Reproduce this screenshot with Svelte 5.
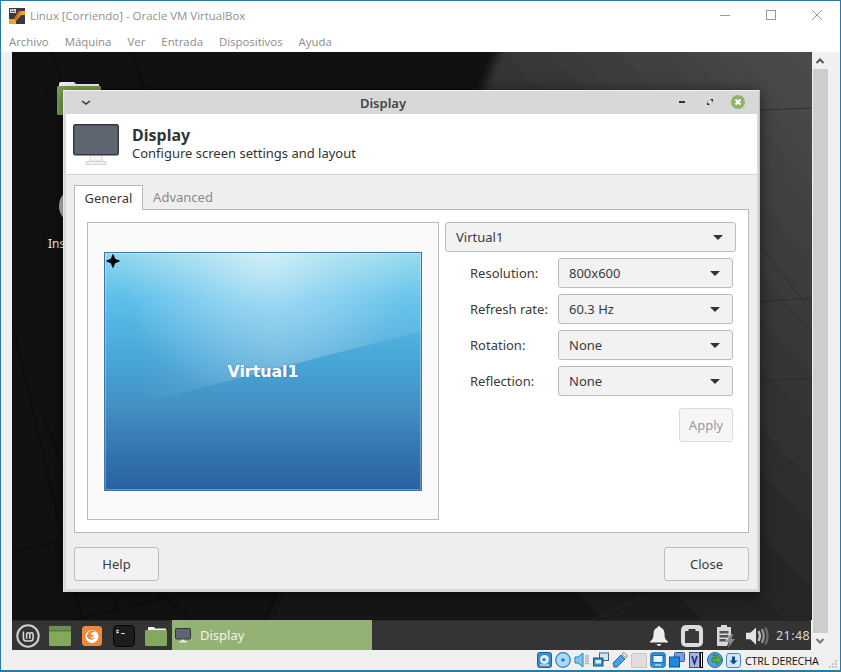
<script>
  const menus = ['Archivo', 'Máquina', 'Ver', 'Entrada', 'Dispositivos', 'Ayuda'];
  const rows = [
    { label: 'Resolution:', value: '800x600' },
    { label: 'Refresh rate:', value: '60.3 Hz' },
    { label: 'Rotation:', value: 'None' },
    { label: 'Reflection:', value: 'None' }
  ];
</script>

<div class="vbox">
  <header class="titlebar">
    <svg class="vbox-logo" viewBox="0 0 16 16" width="16" height="16">
      <rect width="16" height="16" fill="#3a3a40" />
      <path d="M0 16V11H5L10 3H16V7H12L7 13V16Z" fill="#f0a030" />
      <path d="M5 11 10 3H12L7 13Z" fill="#d9661c" />
      <rect x="1" y="1" width="6" height="4" fill="#ddd" />
      <path d="M2 2h1M4 2h1M2 3.5h4" stroke="#444" stroke-width=".8" />
    </svg>
    <span class="title">Linux [Corriendo] - Oracle VM VirtualBox</span>
    <div class="win-controls">
      <svg viewBox="0 0 10 10" width="10" height="10"><path d="M0 5.5H10" stroke="#999" /></svg>
      <svg viewBox="0 0 10 10" width="10" height="10"><rect x=".5" y=".5" width="9" height="9" fill="none" stroke="#999" /></svg>
      <svg viewBox="0 0 10 10" width="10" height="10"><path d="M0 0 10 10M10 0 0 10" stroke="#999" /></svg>
    </div>
  </header>

  <nav class="menubar">
    {#each menus as m}
      <span>{m}</span>
    {/each}
  </nav>

  <div class="middle">
    <main class="desktop">
      <svg class="wallpaper" viewBox="0 0 800 568" preserveAspectRatio="none">
        <defs>
          <linearGradient id="wallGrad" x1="1" y1="0" x2="0.25" y2="0.75">
            <stop offset="0" stop-color="#505050" />
            <stop offset="0.35" stop-color="#3a3a3a" />
            <stop offset="0.7" stop-color="#252525" />
            <stop offset="1" stop-color="#151515" />
          </linearGradient>
          <filter id="soft" x="-5%" y="-5%" width="110%" height="110%">
            <feGaussianBlur stdDeviation="5" />
          </filter>
        </defs>
        <rect width="800" height="568" fill="#111" />
        <polygon points="494,-20 830,-20 830,590 250,590" fill="url(#wallGrad)" filter="url(#soft)" />
        <g stroke="#0a0a0a" stroke-width="2" fill="none" opacity=".55">
          <path d="M40 0 120 240M120 0 190 200M0 270 70 568M30 360 110 568M180 568 60 470" />
          <path d="M0 500 130 470M60 568 220 530" />
        </g>
        <g stroke="#2a2a2a" fill="none" opacity=".8">
          <path d="M700 60 800 56M745 250 800 246M745 330 800 326M640 480 800 400M580 568 800 470M745 190 800 260" />
        </g>
      </svg>

      <div class="desk-icon folder-icon">
        <svg viewBox="0 0 46 36" width="46" height="36">
          <path d="M3 8V5Q3 3 5 3H18L20 5H43V10H3Z" fill="#f4f4f4" />
          <path d="M1 8Q1 7 3 7H44Q45 7 45 9V36H2Q1 36 1 34Z" fill="#7ea356" />
        </svg>
      </div>
      <div class="desk-icon disc-icon"></div>
      <span class="desk-icon desk-label">Ins</span>

      <section class="dialog">
        <div class="dlg-titlebar">
          <svg class="dlg-menu" viewBox="0 0 10 6" width="10" height="6"><path d="M1 1 5 4 9 1" fill="none" stroke="#333" stroke-width="1.5" /></svg>
          <span class="dlg-title">Display</span>
          <div class="dlg-controls">
            <svg viewBox="0 0 8 8" width="8" height="8"><rect x="1" y="3" width="6" height="2" fill="#333" /></svg>
            <svg viewBox="0 0 8 8" width="8" height="8"><path d="M4 1H7V4ZM1 4V7H4Z" fill="#333" /><path d="M3 2 1 3V4L4 1ZM5 6 7 5V4L4 7Z" fill="#aaa" /></svg>
            <svg class="dlg-close" viewBox="0 0 14 14" width="14" height="14">
              <circle cx="7" cy="7" r="7" fill="#8fb46a" />
              <path d="M4.500 4.500 9.500 9.500M9.500 4.500 4.500 9.500" stroke="#fff" stroke-width="2" />
            </svg>
          </div>
        </div>

        <div class="dlg-header">
          <svg class="dlg-monitor" viewBox="0 0 46 42" width="46" height="42">
            <path d="M17 31V37H29V31" fill="#f6f6f8" stroke="#d8dae0" />
            <rect x="13" y="37.5" width="20" height="3" fill="#eef0f2" stroke="#d4d6dc" />
            <rect x=".7" y=".7" width="44.600" height="30" rx="1.500" fill="#5f6672" stroke="#31363f" stroke-width="1.400" />
          </svg>
          <div class="dlg-heading">
            <h1>Display</h1>
            <p>Configure screen settings and layout</p>
          </div>
        </div>

        <div class="dlg-body">
          <div class="tabs">
            <span class="tab active">General</span>
            <span class="tab">Advanced</span>
          </div>
          <div class="page">
            <div class="preview">
              <div class="monitor">
                <svg class="monitor-bg" viewBox="0 0 318 239" preserveAspectRatio="none">
                  <defs>
                    <linearGradient id="skyGrad" x1="0" y1="0" x2="0" y2="1">
                      <stop offset="0" stop-color="#8fd8ec" />
                      <stop offset="0.19" stop-color="#5cbfea" />
                      <stop offset="0.45" stop-color="#48a6d8" />
                      <stop offset="0.65" stop-color="#428fc4" />
                      <stop offset="0.88" stop-color="#3070ac" />
                      <stop offset="1" stop-color="#2b60a2" />
                    </linearGradient>
                    <radialGradient id="glow" gradientUnits="userSpaceOnUse" cx="159" cy="0" r="150">
                      <stop offset="0" stop-color="#fff" stop-opacity=".5" />
                      <stop offset="0.45" stop-color="#fff" stop-opacity=".22" />
                      <stop offset="1" stop-color="#fff" stop-opacity="0" />
                    </radialGradient>
                    <linearGradient id="gloss" gradientUnits="userSpaceOnUse" x1="30" y1="0" x2="318" y2="0">
                      <stop offset="0" stop-color="#fff" stop-opacity="0" />
                      <stop offset="0.5" stop-color="#fff" stop-opacity=".17" />
                      <stop offset="1" stop-color="#fff" stop-opacity=".08" />
                    </linearGradient>
                  </defs>
                  <rect width="318" height="239" fill="url(#skyGrad)" />
                  <polygon points="0,0 318,0 318,79 50,148 0,148" fill="url(#gloss)" />
                  <polygon points="0,0 318,0 318,79 50,148 0,148" fill="url(#glow)" />
                </svg>
                <span class="monitor-name">Virtual1</span>
                <svg class="primary-star" viewBox="0 0 16 16" width="16" height="16">
                  <path d="M8 .5 10.200 5.800 15.500 8 10.200 10.200 8 15.500 5.800 10.200 .5 8 5.800 5.800Z" fill="#050505" />
                </svg>
              </div>
            </div>

            <div class="settings">
              <div class="combo">
                <span>Virtual1</span>
                <i class="caret"></i>
              </div>
              <div class="rows">
                {#each rows as row}
                  <div class="row">
                    <span class="row-label">{row.label}</span>
                    <div class="combo">
                      <span>{row.value}</span>
                      <i class="caret"></i>
                    </div>
                  </div>
                {/each}
              </div>
              <div class="apply-wrap">
                <button class="btn apply" disabled>Apply</button>
              </div>
            </div>
          </div>

          <div class="dlg-actions">
            <button class="btn">Help</button>
            <button class="btn">Close</button>
          </div>
        </div>
      </section>

      <div class="spacer"></div>

      <footer class="panel">
        <svg class="mint" viewBox="0 0 26 26" width="24" height="24">
          <circle cx="13" cy="13" r="11.600" fill="none" stroke="#cfcfcf" stroke-width="2.200" />
          <path d="M8 8V15Q8 18.500 11 18.500H15.500Q18.500 18.500 18.500 15.500V11.500Q18.500 9.500 16.800 9.500 15 9.500 15 11.500V16M15 11.500Q15 9.500 13.200 9.500 11.500 9.500 11.500 11.500V16" fill="none" stroke="#d8d8d8" stroke-width="1.700" />
        </svg>
        <svg class="launcher" viewBox="0 0 22 20" width="22" height="20">
          <rect width="22" height="20" rx="1" fill="#84a95c" />
          <rect width="22" height="4.500" fill="#6f8f4c" />
          <rect y="4.500" width="22" height=".8" fill="#3f5a2a" />
        </svg>
        <svg class="launcher" viewBox="0 0 20 20" width="20" height="20">
          <rect width="20" height="20" rx="3.500" fill="#f08a3a" />
          <circle cx="10" cy="10.500" r="6.500" fill="#fff" />
          <path d="M5 11C6 14 11 15 13 12 11 13 8.500 12.500 8.500 10.500 10 11.500 12 10.500 12 9 10.500 9.500 9 9 8.500 8 9.500 6.500 11 6 13 6 14.500 7.500 15 9 15 10 15 7 13 4.500 10 4.500 7 4.500 5 7 5 11Z" fill="#f08a3a" />
        </svg>
        <svg class="launcher term" viewBox="0 0 22 22" width="22" height="22">
          <rect x=".5" y=".5" width="21" height="21" rx="3.500" fill="#1d1d1d" stroke="#050505" />
          <path d="M4 5.500H6M3.500 7.500H6M4 4.500V8.500M8 8.500H12" stroke="#e8e8e8" stroke-width=".9" fill="none" />
        </svg>
        <svg class="launcher last" viewBox="0 0 22 20" width="22" height="20">
          <path d="M3 4V1.500Q3 1 4 1H9L10 2.500H21V6H3Z" fill="#f4f4f4" />
          <path d="M0 5Q0 4 1 4H21Q22 4 22 5V19Q22 20 21 20H1Q0 20 0 19Z" fill="#84a95c" />
        </svg>
        <div class="task">
          <svg viewBox="0 0 16 15" width="16" height="15">
            <path d="M6.500 11V13H9.500V11" fill="#eee" />
            <rect x="4.500" y="13" width="7" height="1.500" fill="#eee" />
            <rect x=".5" y=".5" width="15" height="10.500" rx="1" fill="#5f6672" stroke="#2f343c" />
          </svg>
          <span>Display</span>
        </div>
        <div class="tray">
          <svg viewBox="0 0 18 20" width="18" height="20">
            <path d="M9 0Q10.500 0 10.500 1.500C13.500 2.500 14.500 5 14.500 8 14.500 12 15.500 14 18 15.500V16.500H0V15.500C2.500 14 3.500 12 3.500 8 3.500 5 4.500 2.500 7.500 1.500 7.500 0 9 0 9 0ZM6.500 18H11.500Q10.500 20 9 20 7.500 20 6.500 18Z" fill="#eee" />
          </svg>
          <svg viewBox="0 0 22 22" width="22" height="22">
            <rect width="22" height="22" rx="5" fill="#dcdcdc" />
            <path d="M4 18V7Q4 6 5 6H7.500V4H14.500V6H17Q18 6 18 7V18Z" fill="#383838" />
          </svg>
          <svg viewBox="0 0 20 24" width="20" height="24">
            <path d="M5 3V1H11V3H15V13L11 22H1V3Z" fill="#d9d9d9" />
            <path d="M3.500 7H12.500V9.500H3.500ZM3.500 11H12.500V13.500H3.500ZM3.500 15H10V17.500H3.500Z" fill="#555" />
            <path d="M15 10 10 18H13.500L12 24 19 15H15.500L17 10Z" fill="#8a8a8a" />
          </svg>
          <svg class="speaker" viewBox="0 0 24 20" width="23" height="20">
            <path d="M0 6.500H4.500L10.500 1V19L4.500 13.500H0Z" fill="#e2e2e2" />
            <path d="M13 5Q16 10 13 15" fill="none" stroke="#c8c8c8" stroke-width="2.400" />
            <path d="M16.500 3Q20.500 10 16.500 17" fill="none" stroke="#999" stroke-width="2.400" />
            <path d="M20 1Q25 10 20 19" fill="none" stroke="#6c6c6c" stroke-width="2.400" />
          </svg>
          <span class="clock">21:48</span>
        </div>
      </footer>
    </main>

    <aside class="vscroll">
      <svg viewBox="0 0 10 6" width="10" height="6"><path d="M1.500 5 5 1.500 8.500 5" fill="none" stroke="#555" stroke-width="2" /></svg>
      <div class="thumb"></div>
      <svg viewBox="0 0 10 6" width="10" height="6"><path d="M1.500 1 5 4.500 8.500 1" fill="none" stroke="#777" stroke-width="2" /></svg>
    </aside>
  </div>

  <footer class="statusbar">
    <svg viewBox="0 0 15 16" width="15" height="16"><rect x=".5" y=".5" width="14" height="15" rx="2" fill="#3b8ed0" stroke="#1d5fa0" /><circle cx="7.500" cy="7.500" r="4.500" fill="#dcecf8" /><circle cx="7" cy="7.500" r="1.500" fill="#3b6ea0" /><path d="M3 13H12" stroke="#fff" /></svg>
    <svg viewBox="0 0 16 16" width="16" height="16"><circle cx="8" cy="8" r="7.300" fill="#a8dcf6" stroke="#2a7fc4" stroke-width="1.200" /><circle cx="8" cy="8" r="1.800" fill="#2a7fc4" /></svg>
    <svg viewBox="0 0 16 16" width="16" height="16"><path d="M1 5H4L9 1V15L4 11H1Z" fill="#7cc4ec" stroke="#2a7fc4" /><path d="M11 4H15M11 6.500H15M11 9H15M11 11.500H15" stroke="#aaa" stroke-width="1.300" /></svg>
    <svg viewBox="0 0 16 16" width="16" height="16"><rect x="6.500" y="1" width="9" height="7.500" fill="#cfe8f8" stroke="#44648a" /><rect x=".5" y="6" width="9.500" height="8" fill="#3b8ed0" stroke="#1d4f88" /><rect x="2.500" y="8" width="5.500" height="3.500" fill="#dff" /></svg>
    <svg viewBox="0 0 16 16" width="16" height="16"><path d="M1 11 9 3 13 7 5 15H2Z" fill="#4aa4e4" stroke="#1d64ac" /><path d="M10 2 12 .5 15.500 4 14 6Z" fill="#eee" stroke="#888" /></svg>
    <svg viewBox="0 0 16 16" width="16" height="16"><path d="M.5 3Q.5 1.500 2 1.500H14Q15.500 1.500 15.500 3V15.500H.5Z" fill="#dedede" stroke="#c8c8c8" /></svg>
    <svg viewBox="0 0 16 16" width="16" height="16"><rect x=".8" y=".8" width="14.400" height="14.400" rx="2" fill="#2f96e4" stroke="#1d64ac" /><rect x="3" y="3.500" width="10" height="7" fill="#e8f6ff" stroke="#1d64ac" /><path d="M5 13H11" stroke="#fff" /></svg>
    <svg viewBox="0 0 16 16" width="16" height="16"><rect x="5.500" y=".5" width="10" height="9" rx="1" fill="#7a9ee0" stroke="#3a5a9a" /><rect x=".5" y="5" width="10" height="10" fill="#1e88dc" stroke="#14508c" /></svg>
    <svg viewBox="0 0 13 16" width="13" height="16"><rect x="1.500" y=".5" width="10" height="15" fill="#a8b4e4" stroke="#3c4a90" /><path d="M4 4 6.500 11.500 9 4" fill="none" stroke="#1e2c70" stroke-width="1.600" /></svg>
    <span class="kbd-bar"></span>
    <svg class="globe" viewBox="0 0 16 16" width="16" height="16"><circle cx="8" cy="8" r="7.500" fill="#4aa4e4" stroke="#2a6aac" /><path d="M6 3H10L15 8 10 13V10H5V6H10Z" fill="#5cae3c" stroke="#2d6a1c" stroke-width=".7" /></svg>
    <svg viewBox="0 0 15 15" width="15" height="15"><rect x=".5" y=".5" width="14" height="14" rx="2.500" fill="#d2e8fa" stroke="#4a88c4" /><path d="M6 3.500H9V7.500H11.500L7.500 11.500 3.500 7.500H6Z" fill="#124e94" /></svg>
    <span class="hostkey">CTRL DERECHA</span>
    <svg class="grip" viewBox="0 0 8 8" width="8" height="8"><path d="M6 0h2v2H6ZM3 3h2v2H3ZM6 3h2v2H6ZM0 6h2v2H0ZM3 6h2v2H3ZM6 6h2v2H6Z" fill="#c4c4c4" /></svg>
  </footer>
</div>

<style>
  :global(body) {
    background: #fff;
  }

  .vbox {
    width: 841px;
    height: 672px;
    box-sizing: border-box;
    border: 1px solid #2b79a8;
    border-bottom-width: 2px;
    display: flex;
    flex-direction: column;
    overflow: hidden;
    background: #f0f0f0;
    font-family: "Noto Sans", sans-serif;
  }

  .titlebar {
    height: 29px;
    flex: none;
    background: #fff;
    display: flex;
    align-items: center;
    padding-left: 8px;
  }
  .vbox-logo {
    margin-right: 5px;
    margin-top: 1px;
  }
  .title {
    font-family: "Open Sans", sans-serif;
    font-size: 11.45px;
    color: #8f8f8f;
  }
  .win-controls {
    margin-left: auto;
    margin-right: 18px;
    display: flex;
    gap: 36px;
    margin-top: -1px;
  }

  .menubar {
    height: 22px;
    flex: none;
    background: #fff;
    display: flex;
    align-items: center;
    padding-left: 8px;
    gap: 16px;
    font-family: "Open Sans", sans-serif;
    font-size: 11.4px;
    color: #8c8c8c;
  }

  .middle {
    flex: 1;
    display: flex;
    min-height: 0;
  }

  .desktop {
    position: relative;
    width: 800px;
    margin-left: 11px;
    display: flex;
    flex-direction: column;
    background: #111;
  }
  .wallpaper {
    position: absolute;
    left: 0;
    top: 0;
    width: 800px;
    height: 568px;
  }
  .spacer {
    flex: 1;
  }

  .desk-icon {
    position: absolute;
  }
  .folder-icon {
    left: 44px;
    top: 27px;
  }
  .disc-icon {
    left: 47px;
    top: 136px;
    width: 36px;
    height: 36px;
    border-radius: 50%;
    background: #bdbdbd;
  }
  .desk-label {
    left: 36px;
    top: 183px;
    color: #eee;
    font-size: 12px;
  }

  .dialog {
    position: absolute;
    left: 51px;
    top: 38px;
    width: 697px;
    height: 502px;
    box-sizing: border-box;
    background: #d8d8d8;
    border-top: 1px solid #f2f2f2;
    border-left: 1px solid #e6e6e6;
    border-right: 1px solid #bdbdbd;
    padding: 0 2px 3px 2px;
    display: flex;
    flex-direction: column;
    color: #3a3a3a;
    box-shadow: 0 2px 14px rgba(0, 0, 0, 0.55);
  }

  .dlg-titlebar {
    height: 23px;
    flex: none;
    display: flex;
    align-items: center;
    justify-content: center;
    padding-right: 57px;
    position: relative;
  }
  .dlg-title {
    font-size: 13px;
    font-weight: 600;
    color: #444;
  }
  .dlg-menu {
    position: absolute;
    left: 15px;
    top: 9px;
  }
  .dlg-controls {
    position: absolute;
    right: 12px;
    top: 4px;
    display: flex;
    align-items: center;
    gap: 20px;
  }
  .dlg-close {
    margin-left: -3px;
  }

  .dlg-header {
    height: 61px;
    flex: none;
    box-sizing: border-box;
    background: #fff;
    border-bottom: 1px solid #d2d2d2;
    display: flex;
    align-items: center;
    padding-left: 7px;
    gap: 13px;
  }
  .dlg-heading {
    margin-top: -2px;
  }
  .dlg-header h1 {
    margin: 0;
    font-size: 16px;
    line-height: 20px;
    font-weight: 700;
    color: #333;
  }
  .dlg-header p {
    margin: 0;
    font-size: 13px;
    line-height: 17px;
    color: #333;
  }
  .dlg-monitor {
    margin-top: 2px;
  }

  .dlg-body {
    flex: 1;
    background: #eeeeee;
    padding: 10px 8px 8px 8px;
    display: flex;
    flex-direction: column;
  }

  .tabs {
    display: flex;
    height: 24px;
    position: relative;
    z-index: 1;
  }
  .tab {
    width: 69px;
    box-sizing: border-box;
    display: flex;
    align-items: center;
    justify-content: center;
    font-size: 13px;
    color: #8a8a8a;
  }
  .tab + .tab {
    width: 80px;
  }
  .tab.active {
    background: #fff;
    color: #3a3a3a;
    border: 1px solid #b8b8b8;
    border-bottom: none;
    height: 25px;
  }

  .page {
    height: 324px;
    box-sizing: border-box;
    background: #fff;
    border: 1px solid #b8b8b8;
    padding: 12px;
    display: flex;
    gap: 6px;
  }

  .preview {
    width: 352px;
    height: 298px;
    box-sizing: border-box;
    flex: none;
    background: #fafafa;
    border: 1px solid #bdbdbd;
    padding: 29px 16px;
  }
  .monitor {
    position: relative;
    width: 318px;
    height: 239px;
    box-sizing: border-box;
    border: 1px solid #3f74a8;
    display: flex;
    align-items: center;
    justify-content: center;
  }
  .monitor::after {
    content: "";
    position: absolute;
    inset: 0;
    border: 1px solid rgba(255, 255, 255, 0.3);
  }
  .monitor-bg {
    position: absolute;
    inset: 0;
    width: 100%;
    height: 100%;
  }
  .monitor-name {
    position: relative;
    font-family: "DejaVu Sans", sans-serif;
    font-weight: 700;
    font-size: 15.8px;
    color: #fff;
    text-shadow: 0 0 2px rgba(60, 110, 160, 0.6);
  }
  .primary-star {
    position: absolute;
    left: 0;
    top: 0;
  }

  .settings {
    flex: 1;
    min-width: 0;
  }
  .combo {
    height: 30px;
    box-sizing: border-box;
    background: #f2f2f2;
    border: 1px solid #bcbcbc;
    border-radius: 3px;
    display: flex;
    align-items: center;
    justify-content: space-between;
    padding: 0 12px 0 10px;
    font-size: 13px;
    color: #3a3a3a;
  }
  .caret {
    width: 0;
    height: 0;
    border-left: 5px solid transparent;
    border-right: 5px solid transparent;
    border-top: 5px solid #333;
  }
  .rows {
    margin-top: 6px;
    display: flex;
    flex-direction: column;
    gap: 6px;
    padding: 0 3px 0 25px;
  }
  .row {
    display: grid;
    grid-template-columns: 88px 1fr;
    align-items: center;
  }
  .row-label {
    font-size: 13px;
    color: #3a3a3a;
  }
  .apply-wrap {
    display: flex;
    justify-content: flex-end;
    padding: 12px 3px 0 0;
  }

  .btn {
    width: 85px;
    height: 34px;
    box-sizing: border-box;
    background: #f2f2f2;
    border: 1px solid #bcbcbc;
    border-radius: 3px;
    font-family: "Noto Sans", sans-serif;
    font-size: 13px;
    color: #3a3a3a;
    padding: 0;
  }
  .btn.apply {
    width: 54px;
    background: #f6f6f6;
    border-color: #dcdcdc;
    color: #999;
  }

  .dlg-actions {
    display: flex;
    justify-content: space-between;
    margin-top: 14px;
  }

  .panel {
    position: relative;
    height: 30px;
    flex: none;
    background: #343434;
    border-top: 1px solid #262626;
    box-sizing: border-box;
    display: flex;
    align-items: center;
  }
  .mint {
    margin-left: 4px;
    margin-right: 9px;
  }
  .launcher {
    flex: none;
    margin-right: 11px;
  }
  .launcher.term {
    margin-right: 10px;
  }
  .launcher.last {
    margin-right: 5px;
  }
  .task {
    width: 200px;
    height: 30px;
    margin-top: -1px;
    box-sizing: border-box;
    background: #93b274;
    display: flex;
    align-items: center;
    padding-left: 3px;
    gap: 9px;
    font-size: 13px;
    color: #f2f2f2;
  }
  .tray {
    margin-left: auto;
    display: flex;
    align-items: center;
    gap: 13px;
    padding-right: 1px;
  }
  .speaker {
    margin-left: -3px;
    margin-right: -6px;
  }
  .clock {
    font-size: 12.5px;
    color: #d8d8d8;
    letter-spacing: 0.4px;
  }

  .vscroll {
    width: 28px;
    padding-right: 12px;
    box-sizing: border-box;
    margin-left: 1px;
    display: flex;
    flex-direction: column;
    align-items: center;
    gap: 5px;
    padding-top: 6px;
    padding-bottom: 6px;
    background: #f0f0f0;
  }
  .thumb {
    width: 15px;
    flex: 1;
    background: #cdcdcd;
  }

  .statusbar {
    height: 20px;
    flex: none;
    display: flex;
    align-items: center;
    padding-left: 536px;
    gap: 3px;
    position: relative;
  }
  .kbd-bar {
    width: 3px;
    height: 16px;
    box-sizing: border-box;
    border: 1px solid #000;
    background: #fff;
    margin-left: -4px;
  }
  .globe {
    margin-left: 1px;
  }
  .hostkey {
    font-family: "Open Sans", sans-serif;
    font-size: 10.8px;
    color: #111;
    letter-spacing: -0.2px;
    margin-left: 1px;
  }
  .grip {
    position: absolute;
    right: 3px;
    bottom: 2px;
  }
</style>
